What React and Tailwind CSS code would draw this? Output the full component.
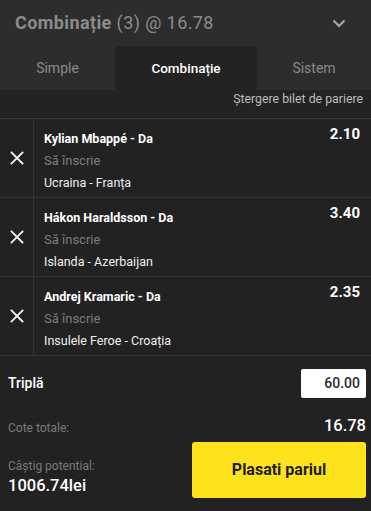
import React from "react";

const bets = [
  { name: "Kylian Mbappé - Da", market: "Să înscrie", match: "Ucraina - Franța", odd: "2.10" },
  { name: "Hákon Haraldsson - Da", market: "Să înscrie", match: "Islanda - Azerbaijan", odd: "3.40" },
  { name: "Andrej Kramaric - Da", market: "Să înscrie", match: "Insulele Feroe - Croația", odd: "2.35" },
];

function XIcon() {
  return (
    <svg width="14" height="14" viewBox="0 0 14 14" fill="none">
      <path d="M1.5 1.5L12.5 12.5M12.5 1.5L1.5 12.5" stroke="#f2f2f2" strokeWidth="1.8" strokeLinecap="square" />
    </svg>
  );
}

export default function App() {
  return (
    <div
      className="w-[371px] h-[511px] bg-[#222222] overflow-hidden"
      style={{ fontFamily: "Roboto, 'Noto Sans', sans-serif" }}
    >
      <div className="h-[46px] bg-[#2d2d2d] flex items-center justify-between pl-[15px] pr-[25px]">
        <div className="text-[18px] tracking-[0.4px] text-[#8c8c8c] leading-[22px]">
          <span className="font-bold">Combinație</span> (3) @ 16.78
        </div>
        <svg width="14" height="9" viewBox="0 0 14 9" fill="none">
          <path d="M1.5 1.5L7 7L12.5 1.5" stroke="#a9a9a9" strokeWidth="2" />
        </svg>
      </div>
      <div className="h-[44px] flex bg-[#2d2d2d] text-[14px]">
        <div className="w-[115px] flex items-center justify-center text-[#8a8a8a]">Simple</div>
        <div className="w-[142px] flex items-center justify-center bg-[#232323] text-white font-medium text-[13.5px]">Combinație</div>
        <div className="flex-1 flex items-center justify-center text-[#8a8a8a]">Sistem</div>
      </div>
      <div className="h-[29px] bg-[#232323] border-b border-[#363636] text-right pr-[8px] pt-px text-[12.3px] leading-[16px] text-[#bdbdbd]">
        Ștergere bilet de pariere
      </div>
      {bets.map((b) => (
        <div key={b.name} className="h-[79px] flex border-b border-[#343434]">
          <div className="w-[34px] border-r border-[#343434] flex items-center justify-center">
            <XIcon />
          </div>
          <div className="flex-1 flex justify-between pl-[10px] pr-[11px] pt-[9px]">
            <div className="flex flex-col leading-[22px]">
              <div className="text-[12.5px] font-bold text-white">{b.name}</div>
              <div className="text-[13px] text-[#7e7e7e]">{b.market}</div>
              <div className="text-[12.5px] text-[#f0f0f0]">{b.match}</div>
            </div>
            <div className="-mt-[4px] text-[15px] leading-[20px] font-bold text-white">{b.odd}</div>
          </div>
        </div>
      ))}
      <div className="pl-[8px] pr-[5px]">
        <div className="mt-[13px] h-[29px] flex items-center justify-between">
          <div className="text-[14px] font-medium text-white">Triplă</div>
          <div className="w-[65px] h-[29px] bg-white rounded-[2px] flex items-center justify-end pr-[6px] text-[14px] font-medium text-[#2a2a2a]">
            60.00
          </div>
        </div>
        <div className="mt-[20px] h-[20px] flex items-center justify-between">
          <div className="text-[12px] text-[#7b7b7b]">Cote totale:</div>
          <div className="text-[16.5px] font-medium text-white -mt-[3px]">16.78</div>
        </div>
        <div className="mt-[4px] flex justify-between">
          <div className="flex flex-col pt-[14px] leading-[20px]">
            <div className="text-[12px] text-[#7b7b7b]">Câștig potential:</div>
            <div className="text-[16.5px] font-medium text-white">1006.74lei</div>
          </div>
          <div className="w-[174px] h-[56px] bg-[#fde21c] rounded-[3px] flex items-center justify-center text-[16px] font-bold text-[#1c1c1c]">
            Plasati pariul
          </div>
        </div>
      </div>
    </div>
  );
}
